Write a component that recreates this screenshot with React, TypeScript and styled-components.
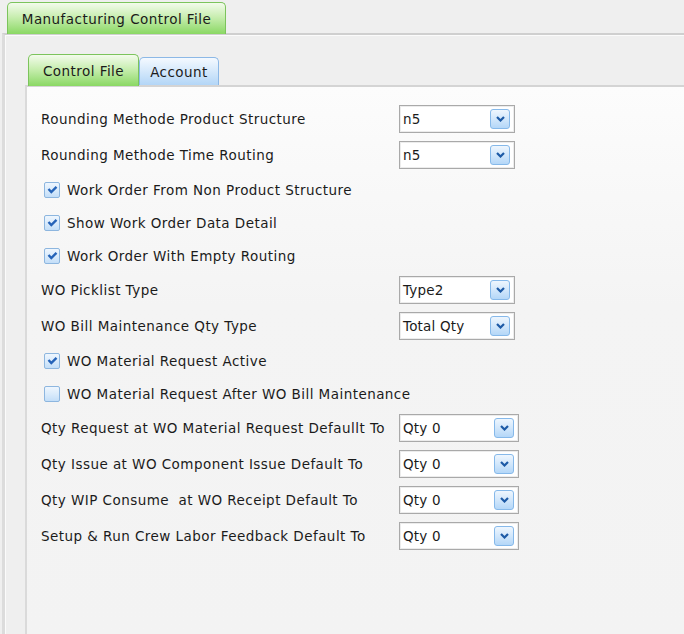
import React from 'react';
import styled, { createGlobalStyle } from 'styled-components';

const GlobalStyle = createGlobalStyle`
  html, body {
    margin: 0;
    padding: 0;
    background: #efefef;
    overflow: hidden;
  }
  body {
    font-family: "DejaVu Sans", Verdana, sans-serif;
    font-size: 13.5px;
    letter-spacing: 0.45px;
    color: #1b1b1b;
  }
`;

const Page = styled.div`
  width: 684px;
  height: 634px;
  display: flex;
  flex-direction: column;
  overflow: hidden;
`;

const TabStrip = styled.div<{ indent: number; height: number }>`
  display: flex;
  align-items: flex-end;
  padding-left: ${({ indent }) => indent}px;
  height: ${({ height }) => height}px;
  flex-shrink: 0;
`;

const Tab = styled.div<{ active?: boolean; width: number }>`
  box-sizing: border-box;
  width: ${({ width }) => width}px;
  height: ${({ active }) => (active ? 32 : 28)}px;
  display: flex;
  align-items: center;
  justify-content: center;
  border: 1px solid ${({ active }) => (active ? '#7cc45c' : '#8cb8e6')};
  border-bottom: none;
  border-radius: 5px 5px 0 0;
  background: ${({ active }) =>
    active
      ? 'linear-gradient(#f3fbec 0%, #c8eeb0 45%, #8ad864 100%)'
      : 'linear-gradient(#f4f9ff 0%, #d4e8fb 50%, #b3d6f7 100%)'};
  white-space: nowrap;
  padding-top: 1px;
  margin-bottom: ${({ active }) => (active ? -1 : 0)}px;
  position: relative;
  z-index: ${({ active }) => (active ? 1 : 0)};
`;

const OuterPanel = styled.div`
  flex: 1;
  margin-left: 2px;
  border-top: 2px solid #cfcfcf;
  border-left: 3px solid #dcdcdc;
  box-shadow: inset 1px 1px 0 #fbfbfb;
  background: #efefef;
  display: flex;
  flex-direction: column;
`;

const InnerWrap = styled.div`
  flex: 1;
  display: flex;
  flex-direction: column;
  padding-left: 20px;
`;

const InnerPanel = styled.div`
  flex: 1;
  border-top: 2px solid #d4d4d4;
  border-left: 2px solid #dadada;
  background: linear-gradient(#fcfcfc 0%, #f4f4f4 40%, #f3f3f3 100%);
  padding: 14px 0 0 14px;
  display: flex;
  flex-direction: column;
`;

const FieldRow = styled.div`
  height: 36px;
  display: flex;
  align-items: center;
`;

const Label = styled.div`
  width: 358px;
  white-space: pre;
`;

const Combo = styled.div<{ wide?: boolean }>`
  box-sizing: border-box;
  width: ${({ wide }) => (wide ? 120 : 116)}px;
  height: 28px;
  border: 1px solid #a9a9a9;
  box-shadow: inset 0 0 0 1px #ececec;
  background: #fff;
  display: flex;
  align-items: center;
  justify-content: space-between;
  padding: 0 4px 0 3px;
  letter-spacing: 0.2px;
`;

const DropButton = styled.div`
  box-sizing: border-box;
  width: 20px;
  height: 20px;
  border: 1px solid #86b9ea;
  border-radius: 3px;
  background: linear-gradient(#eef6fe 0%, #d2e7fb 50%, #b4d7f8 100%);
  display: flex;
  align-items: center;
  justify-content: center;
`;

const CheckRow = styled.label`
  height: 33px;
  display: flex;
  align-items: center;
  gap: 7px;
  padding-left: 3px;
  white-space: nowrap;
`;

const Box = styled.span`
  box-sizing: border-box;
  width: 16px;
  height: 16px;
  border: 1px solid #8db6df;
  border-radius: 2px;
  background: linear-gradient(#eef6fe 0%, #d8eafb 55%, #c3def8 100%);
  display: flex;
  align-items: center;
  justify-content: center;
`;

const Chevron = () => (
  <svg width="9" height="6" viewBox="0 0 9 6">
    <path d="M1 1 L4.5 4.5 L8 1" fill="none" stroke="#1d5aa6" strokeWidth="2.2" />
  </svg>
);

const Tick = () => (
  <svg width="11" height="9" viewBox="0 0 11 9">
    <path d="M1.5 4 L4.3 7 L9.5 1.8" fill="none" stroke="#2563b8" strokeWidth="2.4" />
  </svg>
);

type Item =
  | { kind: 'combo'; label: string; value: string; wide?: boolean }
  | { kind: 'check'; label: string; checked: boolean };

const items: Item[] = [
  { kind: 'combo', label: 'Rounding Methode Product Structure', value: 'n5' },
  { kind: 'combo', label: 'Rounding Methode Time Routing', value: 'n5' },
  { kind: 'check', label: 'Work Order From Non Product Structure', checked: true },
  { kind: 'check', label: 'Show Work Order Data Detail', checked: true },
  { kind: 'check', label: 'Work Order With Empty Routing', checked: true },
  { kind: 'combo', label: 'WO Picklist Type', value: 'Type2' },
  { kind: 'combo', label: 'WO Bill Maintenance Qty Type', value: 'Total Qty' },
  { kind: 'check', label: 'WO Material Request Active', checked: true },
  { kind: 'check', label: 'WO Material Request After WO Bill Maintenance', checked: false },
  { kind: 'combo', label: 'Qty Request at WO Material Request Defaullt To', value: 'Qty 0', wide: true },
  { kind: 'combo', label: 'Qty Issue at WO Component Issue Default To', value: 'Qty 0', wide: true },
  { kind: 'combo', label: 'Qty WIP Consume  at WO Receipt Default To', value: 'Qty 0', wide: true },
  { kind: 'combo', label: 'Setup & Run Crew Labor Feedback Default To', value: 'Qty 0', wide: true },
];

const App: React.FC = () => (
  <Page>
    <GlobalStyle />
    <TabStrip indent={7} height={33}>
      <Tab active width={219}>Manufacturing Control File</Tab>
    </TabStrip>
    <OuterPanel>
      <InnerWrap>
        <TabStrip indent={3} height={50}>
          <Tab active width={111}>Control File</Tab>
          <Tab width={80}>Account</Tab>
        </TabStrip>
        <InnerPanel>
          {items.map((it, i) =>
            it.kind === 'combo' ? (
              <FieldRow key={i}>
                <Label>{it.label}</Label>
                <Combo wide={it.wide}>
                  <span>{it.value}</span>
                  <DropButton>
                    <Chevron />
                  </DropButton>
                </Combo>
              </FieldRow>
            ) : (
              <CheckRow key={i}>
                <Box>{it.checked && <Tick />}</Box>
                {it.label}
              </CheckRow>
            )
          )}
        </InnerPanel>
      </InnerWrap>
    </OuterPanel>
  </Page>
);

export default App;
